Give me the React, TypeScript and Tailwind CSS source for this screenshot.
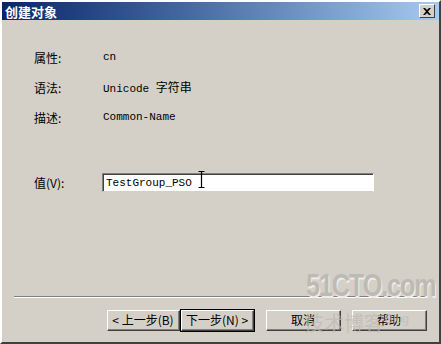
import React from "react";

const cjk = { fontFamily: '"Noto Sans CJK SC", "Noto Sans", sans-serif' };
const mono = { fontFamily: '"Liberation Mono", "Noto Sans CJK SC", monospace' };

function Btn({ children, def }: { children: React.ReactNode; def?: boolean }) {
  return (
    <div className={def ? "border border-black" : ""}>
      <div className="border-t border-l border-white border-r border-b border-r-[#404040] border-b-[#404040]">
        <div className="h-[19px] flex items-center justify-center border-r border-b border-[#808080] text-[12px] text-black" style={cjk}>
          {children}
        </div>
      </div>
    </div>
  );
}

export default function App() {
  return (
    <div className="w-[441px] h-[344px] bg-[#d4d0c8] border-l-2 border-l-white border-r-2 border-r-[#404040] border-b-2 border-b-[#404040] border-t-2 border-t-white flex flex-col relative overflow-hidden">
      <div className="h-[18px] flex items-center justify-between pl-[3px] pr-[4px] bg-gradient-to-r from-[#0a246a] to-[#a6caf0]">
        <span className="text-white font-bold text-[13px] leading-none" style={cjk}>创建对象</span>
        <div className="w-[16px] h-[14px] bg-[#d4d0c8] border-t border-l border-white border-r border-b border-r-[#404040] border-b-[#404040] flex items-center justify-center">
          <svg width="8" height="7" viewBox="0 0 8 7">
            <path d="M0 0 L2 0 L4 2 L6 0 L8 0 L5 3.5 L8 7 L6 7 L4 5 L2 7 L0 7 L3 3.5 Z" fill="#000" />
          </svg>
        </div>
      </div>

      <div className="flex flex-col pl-[32px] pt-[29px] gap-[13px] text-[12px] text-black">
        <div className="flex items-center h-[17px]">
          <span className="w-[69px]" style={cjk}>属性:</span>
          <span className="text-[11px]" style={mono}>cn</span>
        </div>
        <div className="flex items-center h-[17px]">
          <span className="w-[69px]" style={cjk}>语法:</span>
          <span className="text-[11px]" style={mono}>Unicode <span className="text-[12px]" style={cjk}>字符串</span></span>
        </div>
        <div className="flex items-center h-[17px]">
          <span className="w-[69px]" style={cjk}>描述:</span>
          <span className="text-[11px]" style={mono}>Common-Name</span>
        </div>
      </div>

      <div className="flex items-center pl-[32px] mt-[47px] text-[12px]">
        <span className="w-[68px]" style={cjk}>值(V):</span>
        <div className="w-[272px] h-[19px] bg-white border-t border-l border-[#808080] border-r border-b border-r-white border-b-[#d4d0c8] flex">
          <div className="flex-1 border-t border-l border-[#404040] flex items-center pl-[2px] relative">
            <span className="text-[11px] text-black" style={mono}>TestGroup_PSO</span>
            <svg className="absolute left-[94px] top-[-4px]" width="7" height="17" viewBox="0 0 7 17">
              <path d="M0.5 0.5 H6.5 M3.5 0.5 V16.5 M0.5 16.5 H6.5" stroke="#000" strokeWidth="1.2" fill="none" />
            </svg>
          </div>
        </div>
      </div>

      <div className="flex-1" />

      <div className="mx-[12px] border-t border-[#808080] border-b border-b-white" />

      <div className="flex items-center pl-[105px] pr-[12px] pt-[11px] pb-[10px]">
        <div className="w-[73px]"><Btn>&lt; 上一步(B)</Btn></div>
        <div className="w-[75px]"><Btn def>下一步(N) &gt;</Btn></div>
        <div className="w-[75px] ml-[11px]"><Btn>取消</Btn></div>
        <div className="w-[75px] ml-[11px]"><Btn>帮助</Btn></div>
      </div>

      <div className="absolute left-[304px] top-[268px] text-[25px] font-bold tracking-[-1px] text-[#bdbab3] leading-none pointer-events-none origin-top scale-y-[1.25]" style={{ fontFamily: '"Liberation Sans", sans-serif', textShadow: "1px 1px 0 #eeece8" }}>
        51CTO.com
      </div>
      <div className="absolute left-[302px] top-[311px] text-[#bdbab3] opacity-70 leading-none pointer-events-none flex items-start gap-[1px]" style={cjk}>
        <span className="text-[20px]">技术博客</span>
        <span className="text-[12px] leading-none" style={{ fontFamily: '"Liberation Sans", sans-serif' }}>Blog</span>
      </div>
    </div>
  );
}
